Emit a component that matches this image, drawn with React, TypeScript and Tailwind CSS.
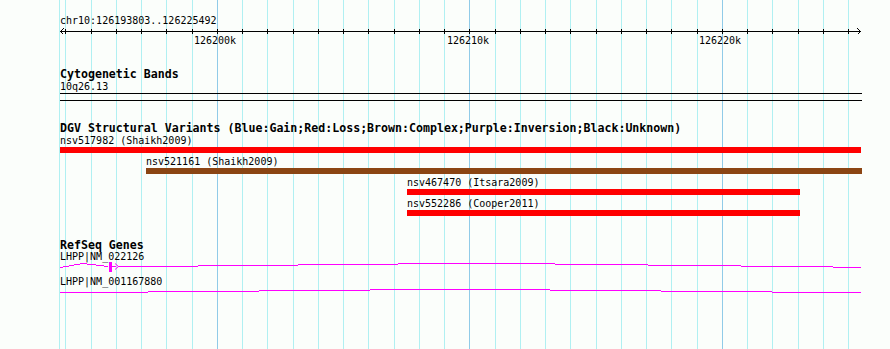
import React from 'react';

// 1 kb grid, 126194000 .. 126225000
const gridX = Array.from({ length: 32 }, (_, k) => ({
  x: Math.round(65.4 + k * 25.245),
  major: k % 10 === 6,
}));

const tickLabels = [
  { label: '126200k', left: 194 },
  { label: '126210k', left: 447 },
  { label: '126220k', left: 699 },
];

const variants = [
  { name: 'nsv517982 (Shaikh2009)', left: 60, width: 801, color: 'bg-[#ff0000]' },
  { name: 'nsv521161 (Shaikh2009)', left: 146, width: 716, color: 'bg-[#8b4513]' },
  { name: 'nsv467470 (Itsara2009)', left: 407, width: 393, color: 'bg-[#ff0000]' },
  { name: 'nsv552286 (Cooper2011)', left: 407, width: 393, color: 'bg-[#ff0000]' },
];

const small = 'h-[13px] text-[10px] leading-[13px] whitespace-nowrap';
const bold = 'h-[12px] text-[11.6px] leading-[12px] font-bold whitespace-nowrap ml-[60px]';

const App = () => {
  return (
    <div className="relative w-[890px] h-[349px] overflow-hidden bg-[#fbfefb] text-black font-['DejaVu_Sans_Mono','Liberation_Mono',monospace]">
      {/* grid */}
      <svg className="absolute inset-0" width={890} height={349}>
        <rect x={59} y={0} width={1} height={349} fill="#b0f0f2" />
        {gridX.map((g, i) => (
          <rect key={i} x={g.x} y={0} width={1} height={349} fill={g.major ? '#90cbe8' : '#b0f0f2'} />
        ))}
      </svg>

      <div className="relative flex flex-col pt-[14px]">
        {/* Ruler */}
        <div className={`${small} ml-[60px]`}>chr10:126193803..126225492</div>
        <svg width={890} height={8} className="block" shapeRendering="crispEdges">
          <rect x={60} y={4} width={801} height={1} fill="#000" />
          {gridX.map((g, i) => (
            <rect key={i} x={g.x} y={2} width={1} height={5} fill="#000" />
          ))}
          <polyline points="63.5,1.5 60.5,4.5 63.5,7.5" fill="none" stroke="#000" />
          <polyline points="857.5,1.5 860.5,4.5 857.5,7.5" fill="none" stroke="#000" />
        </svg>
        <div className="relative h-[13px] -mt-[1px]">
          {tickLabels.map((t) => (
            <span key={t.label} className={`absolute top-0 ${small}`} style={{ left: t.left }}>
              {t.label}
            </span>
          ))}
        </div>

        {/* Cytogenetic Bands */}
        <div className={`${bold} mt-[21px]`}>Cytogenetic Bands</div>
        <div className={`${small} ml-[60px]`}>10q26.13</div>
        <div className="ml-[60px] w-[802px] h-[8px] border-y border-black" />

        {/* DGV */}
        <div className={`${bold} mt-[21px]`}>
          DGV Structural Variants (Blue:Gain;Red:Loss;Brown:Complex;Purple:Inversion;Black:Unknown)
        </div>
        {variants.map((v, i) => (
          <div key={v.name} className={i === 0 ? '' : 'mt-[2px]'}>
            <div className={small} style={{ marginLeft: v.left }}>
              {v.name}
            </div>
            <div className={`h-[6px] ${v.color}`} style={{ marginLeft: v.left, width: v.width }} />
          </div>
        ))}

        {/* RefSeq Genes */}
        <div className={`${bold} mt-[23px]`}>RefSeq Genes</div>
        <div className="h-[11px] text-[10px] leading-[11px] whitespace-nowrap ml-[60px]">LHPP|NM_022126</div>
        <svg width={890} height={12} className="block">
          <polyline points="60,5.5 83,1.5 108.5,4.5" fill="none" stroke="#ff00ff" shapeRendering="crispEdges" />
          <rect x={109} y={0} width={3} height={10} fill="#ff00ff" />
          <rect x={112} y={4} width={4} height={1} fill="#ff00ff" />
          <polyline points="115,1.5 118.5,4.5 115,7.5" fill="none" stroke="#ff00ff" />
          <polyline points="118,4.8 480,1.2 861,5.3" fill="none" stroke="#ff00ff" shapeRendering="crispEdges" />
        </svg>
        <div className="h-[12px] mt-[2px] text-[10px] leading-[12px] whitespace-nowrap ml-[60px]">LHPP|NM_001167880</div>
        <svg width={890} height={8} className="block">
          <polyline points="60,4.8 460,1.2 861,4.8" fill="none" stroke="#ff00ff" shapeRendering="crispEdges" />
        </svg>
      </div>
    </div>
  );
};

export default App;
